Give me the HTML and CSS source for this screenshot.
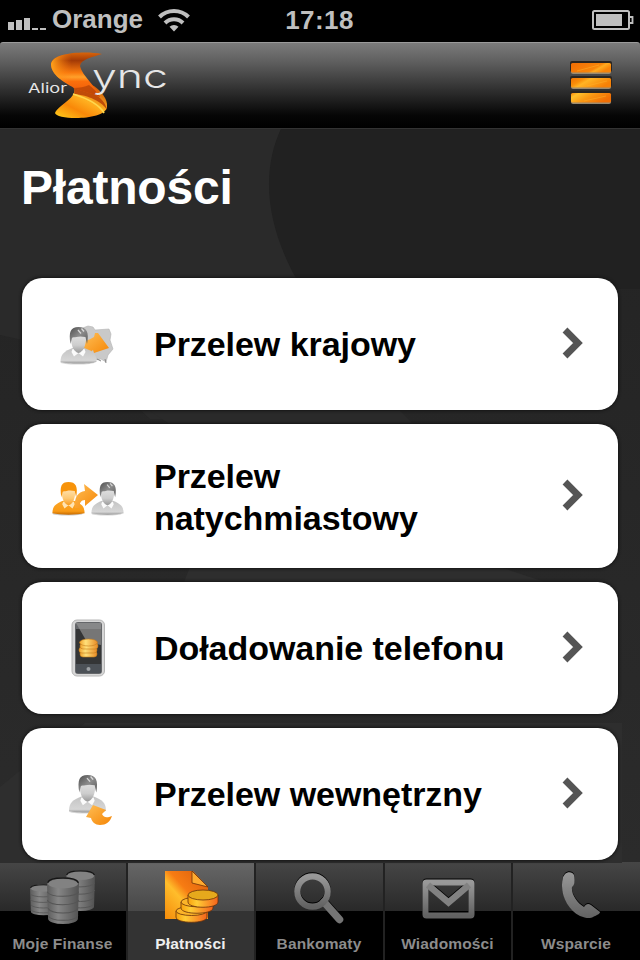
FILE: index.html
```
<!DOCTYPE html>
<html lang="pl">
<head>
    <meta charset="UTF-8">
    <meta name="viewport" content="width=device-width, initial-scale=1.0">
    <title>Płatności</title>
    <link rel="stylesheet" href="styles.css">
</head>
<body>
    <!-- shared gradients and symbols -->
    <svg class="defs" width="0" height="0">
        <defs>
            <linearGradient id="gray" x1="0" y1="0" x2="0" y2="1">
                <stop offset="0" stop-color="#999"/>
                <stop offset="1" stop-color="#626262"/>
            </linearGradient>
            <linearGradient id="coinGray" x1="0" y1="0" x2="1" y2="0">
                <stop offset="0" stop-color="#5c5c5c"/>
                <stop offset=".35" stop-color="#868686"/>
                <stop offset="1" stop-color="#525252"/>
            </linearGradient>
            <linearGradient id="coinGold" x1="0" y1="0" x2="1" y2="0">
                <stop offset="0" stop-color="#f9a10d"/>
                <stop offset=".3" stop-color="#ffcc35"/>
                <stop offset="1" stop-color="#f4631c"/>
            </linearGradient>
            <linearGradient id="coinPale" x1="0" y1="0" x2="1" y2="0">
                <stop offset="0" stop-color="#f0a02a"/>
                <stop offset=".35" stop-color="#ffe07a"/>
                <stop offset="1" stop-color="#e88a25"/>
            </linearGradient>
            <linearGradient id="orange" x1="0" y1="0" x2="1" y2="1">
                <stop offset="0" stop-color="#ffbe55"/>
                <stop offset="1" stop-color="#f58606"/>
            </linearGradient>
            <linearGradient id="faceGray" x1="0" y1="0" x2="0" y2="1">
                <stop offset="0" stop-color="#e4e4e4"/>
                <stop offset=".6" stop-color="#cdcdcd"/>
                <stop offset="1" stop-color="#999"/>
            </linearGradient>
            <linearGradient id="faceOrange" x1="0" y1="0" x2="0" y2="1">
                <stop offset="0" stop-color="#ffe6b8"/>
                <stop offset=".6" stop-color="#fdc873"/>
                <stop offset="1" stop-color="#f89a1c"/>
            </linearGradient>
            <linearGradient id="bodyGray" x1="0" y1="0" x2="0" y2="1">
                <stop offset="0" stop-color="#c4c4c4"/>
                <stop offset=".8" stop-color="#d6d6d6"/>
                <stop offset="1" stop-color="#999"/>
            </linearGradient>
            <linearGradient id="bodyOrange" x1="0" y1="0" x2="0" y2="1">
                <stop offset="0" stop-color="#fba628"/>
                <stop offset=".75" stop-color="#f99b16"/>
                <stop offset="1" stop-color="#c66a00"/>
            </linearGradient>
            <linearGradient id="hairGray" x1="0" y1="0" x2="1" y2="1">
                <stop offset="0" stop-color="#4e4e4e"/>
                <stop offset=".5" stop-color="#8c8c8c"/>
                <stop offset="1" stop-color="#5a5a5a"/>
            </linearGradient>
        </defs>
        <symbol id="person" viewBox="0 0 36 38">
            <ellipse cx="17" cy="35.500" rx="17" ry="2" fill="#000" opacity=".16"/>
            <path d="M0 35C0 27 4 24 12 21h12c8 3 12 6 12 14-8 2-28 2-36 0z" fill="url(#bodyGray)"/>
            <path d="M12 22l-1 3 2.500 4.500 4.500-3.500 4.500 3.500 2.500-4.500-1-3z" fill="#fbfbfb"/>
            <path d="M10.500 11c0 8 3 14 7.500 15 4.500-1 7.500-7 7.500-15-2-6-13-6-15 0z" fill="url(#faceGray)"/>
            <path d="M10 17C8 5 10 0 18 0c8 0 11 5 8.500 17L25 10c-3-.5-6-1-9 0-2 .5-4 0-4.500 1z" fill="url(#hairGray)"/>
            <path d="M17.500 3l3 3.500M21 1.500l2.500 3" stroke="#d8d8d8" stroke-width="1.300"/>
        </symbol>
        <symbol id="personOrange" viewBox="0 0 36 38">
            <ellipse cx="17" cy="35.500" rx="17" ry="2" fill="#000" opacity=".2"/>
            <path d="M0 35C0 27 4 24 12 21h12c8 3 12 6 12 14-8 2-28 2-36 0z" fill="url(#bodyOrange)"/>
            <path d="M12 22l-1 3 2.500 4.500 4.500-3.500 4.500 3.500 2.500-4.500-1-3z" fill="#ffe4b3"/>
            <path d="M10.500 11c0 8 3 14 7.500 15 4.500-1 7.500-7 7.500-15-2-6-13-6-15 0z" fill="url(#faceOrange)"/>
            <path d="M10 17C8 5 10 0 18 0c8 0 11 5 8.500 17L25 10c-3-.5-6-1-9 0-2 .5-4 0-4.500 1z" fill="#f7930a"/>
        </symbol>
        <symbol id="stack" viewBox="0 0 30 46" preserveAspectRatio="none">
            <path d="M0 6a15 5.500 0 0 1 30 0l-1 34a14 5 0 0 1-28 0z" fill="url(#coinGray)"/>
            <path d="M0 14c3 6 26 6 30 0M0 22c3 6 26 6 30 0M1 30c3 6 25 6 28 0M1 37c3 6 25 6 28 0" fill="none" stroke="#555" stroke-width="1"/>
            <ellipse cx="15" cy="6.500" rx="14" ry="4.500" fill="#828282"/>
            <path d="M.5 5.500c2-6 27-6 29 0" fill="none" stroke="#151515" stroke-width="1.300"/>
        </symbol>
    </svg>

    <div class="screen">
        <!-- Status bar -->
        <div class="status-bar">
            <div class="status-left">
                <svg class="signal" width="38" height="14" viewBox="0 0 38 14">
                    <path d="M0 6h6v8H0zM8 4h6v10H8zM16 2h6v12h-6zM24 12h6v2h-6zM32 12h6v2h-6z" fill="#bfbfbf"/>
                </svg>
                <span>Orange</span>
                <svg class="wifi" width="32" height="24" viewBox="0 0 32 24">
                    <g fill="none" stroke="#bfbfbf" stroke-width="4">
                        <path d="M1.500 9a20.500 20.500 0 0 1 29 0"/>
                        <path d="M7 15a12.700 12.700 0 0 1 18 0"/>
                    </g>
                    <path d="M11.500 18.800a6.500 6.500 0 0 1 9 0L16 23.500z" fill="#bfbfbf"/>
                </svg>
            </div>
            <span class="clock">17:18</span>
            <svg class="battery" width="42" height="20" viewBox="0 0 42 20">
                <rect x="1" y="1" width="36" height="18" rx="1.500" fill="none" stroke="#bfbfbf" stroke-width="2"/>
                <rect x="4" y="4" width="26" height="12" fill="#bfbfbf"/>
                <path d="M37 7h3.500v6H37" fill="none" stroke="#bfbfbf" stroke-width="1.800"/>
            </svg>
        </div>

        <!-- Header -->
        <header class="header">
            <svg class="logo" width="150" height="72" viewBox="0 0 150 72">
                <defs>
                    <linearGradient id="sTop" x1="0" y1="0" x2="0" y2="1">
                        <stop offset="0" stop-color="#d8640a"/>
                        <stop offset=".18" stop-color="#a33a06"/>
                        <stop offset=".45" stop-color="#f8790e"/>
                        <stop offset=".55" stop-color="#ffa02a"/>
                        <stop offset=".65" stop-color="#fb6f0c"/>
                        <stop offset="1" stop-color="#e7540a"/>
                    </linearGradient>
                    <linearGradient id="sTopLight" x1="0" y1="0" x2="1" y2="0">
                        <stop offset="0" stop-color="#ffa41c"/>
                        <stop offset=".4" stop-color="#ff7a0a" stop-opacity="0"/>
                    </linearGradient>
                    <linearGradient id="sBottom" x1="0" y1="1" x2=".8" y2="0">
                        <stop offset="0" stop-color="#ffd01c"/>
                        <stop offset=".35" stop-color="#f98808"/>
                        <stop offset=".6" stop-color="#ffb020"/>
                        <stop offset="1" stop-color="#c84f08"/>
                    </linearGradient>
                </defs>
                <path d="M46 37C50 48 31 54 27 63c1 7 50 8 52-6 1-8-6-16-13-21-7-3-15-2-20 1z" fill="url(#sBottom)"/>
                <path d="M45 36c13 3 32 10 34 24-4-8-19-15-33-16 1-3 0-5-1-8z" fill="#c04c08"/>
                <path d="M45 44c13 4 26 10 31 19" fill="none" stroke="#ffd84e" stroke-width="1.800"/>
                <path d="M74 4C58 1 25 2 23 14c0 11 13 18 23 24 9 4 18 5 26 9-3-10-18-21-20-31 1-7 13-9 22-12z" fill="url(#sTop)"/>
                <path d="M74 4C58 1 25 2 23 14c0 11 13 18 23 24 9 4 18 5 26 9-3-10-18-21-20-31 1-7 13-9 22-12z" fill="url(#sTopLight)"/>
                <path d="M46 38c9 4 18 5 26 9-3-5-7-9-11-12-4 2-10 3-15 3z" fill="#b04106" opacity=".7"/>
                <text class="logo-small" x="0" y="43" textLength="39" lengthAdjust="spacingAndGlyphs">Alior</text>
                <text class="logo-big" x="64" y="37.500" textLength="76" lengthAdjust="spacingAndGlyphs">ync</text>
            </svg>
            <svg class="menu" width="44" height="46" viewBox="0 0 44 46">
                <defs>
                    <linearGradient id="bar1" x1="0" y1="0" x2="1" y2=".4">
                        <stop offset="0" stop-color="#f06c04"/>
                        <stop offset=".7" stop-color="#f9860a"/>
                        <stop offset=".8" stop-color="#ffab20"/>
                        <stop offset="1" stop-color="#f98408"/>
                    </linearGradient>
                    <linearGradient id="bar2" x1="0" y1="0" x2="1" y2=".4">
                        <stop offset="0" stop-color="#ef7204"/>
                        <stop offset=".3" stop-color="#f9900a"/>
                        <stop offset=".45" stop-color="#ffb424"/>
                        <stop offset="1" stop-color="#f78106"/>
                    </linearGradient>
                    <linearGradient id="bar3" x1="0" y1="0" x2="1" y2=".4">
                        <stop offset="0" stop-color="#f98408"/>
                        <stop offset=".18" stop-color="#ffc02c"/>
                        <stop offset=".5" stop-color="#fb9a14"/>
                        <stop offset="1" stop-color="#f26f04"/>
                    </linearGradient>
                </defs>
                <g fill="#2b2520">
                    <rect x="1" y="1" width="42" height="11" rx="2"/>
                    <rect x="1" y="16" width="42" height="11" rx="2"/>
                    <rect x="1" y="31" width="42" height="11" rx="2"/>
                </g>
                <g fill="#9b8b70">
                    <rect x="2" y="4" width="40" height="10" rx="2"/>
                    <rect x="2" y="19" width="40" height="10" rx="2"/>
                    <rect x="2" y="34" width="40" height="10" rx="2"/>
                </g>
                <rect x="2" y="3" width="40" height="9.500" rx="1.500" fill="url(#bar1)"/>
                <rect x="2" y="18" width="40" height="9.500" rx="1.500" fill="url(#bar2)"/>
                <rect x="2" y="33" width="40" height="9.500" rx="1.500" fill="url(#bar3)"/>
                <path d="M8 11l22-6M18 26l20-5M15 41l22-5" stroke="#ffb02a" stroke-width="1" opacity=".5"/>
            </svg>
        </header>

        <!-- Content -->
        <main class="content">
            <svg class="backdrop" width="640" height="734" viewBox="0 0 640 734">
                <path d="M0 0h281C266 34 264 80 298 150L350 290H150Q80 220 0 206z" fill="#2a2a2a"/>
                <path d="M281 0h359v160H302C263 95 262 40 281 0z" fill="#212121"/>
                <path d="M150 282h250l20 20H180z" fill="#2a2a2a"/>
                <path d="M190 438h310l60 20H182zM85 594h537v140H0V658L22 640z" fill="#2e2e2e"/>
            </svg>
            <h1>Płatności</h1>
            <div class="list">
                <a class="card">
                    <span class="card-icon">
                        <svg width="72" height="50" viewBox="0 0 72 50">
                            <path d="M28 10l8-3 5 1 2 3 14-1 2 5-1 6 3 9-5 6-2 7-5-3-5 1-5-3-9 1z" fill="#c9c9c9" stroke="#b4b4b4" stroke-width=".6"/>
                            <path d="M53 40l1 4M45 40l4 2" stroke="#888" stroke-width="1"/>
                            <path d="M32 22c4-1 7-2 10-4l1-4 3 0 11 15-15 5-1-3-5 4-4-1z" fill="url(#orange)"/>
                            <use href="#person" x="8" y="8" width="37" height="38"/>
                        </svg>
                    </span>
                    <span class="card-title">Przelew krajowy</span>
                    <svg class="chevron" width="24" height="34" viewBox="0 0 24 34"><path d="M4 4l13 13L4 30" fill="none" stroke="#555" stroke-width="6.800"/></svg>
                </a>
                <a class="card tall">
                    <span class="card-icon">
                        <svg width="72" height="50" viewBox="0 0 72 50">
                            <use href="#personOrange" x="0" y="11" width="33" height="34"/>
                            <use href="#person" x="39" y="11" width="33" height="34"/>
                            <path d="M23 37c-1-11 3-16 10-17l-1-7 14 11-13 11 0-6c-4 0-6 3-5 8z" fill="url(#orange)"/>
                        </svg>
                    </span>
                    <span class="card-title">Przelew natychmiastowy</span>
                    <svg class="chevron" width="24" height="34" viewBox="0 0 24 34"><path d="M4 4l13 13L4 30" fill="none" stroke="#555" stroke-width="6.800"/></svg>
                </a>
                <a class="card">
                    <span class="card-icon">
                        <svg width="72" height="60" viewBox="0 0 72 60">
                            <rect x="20" y="2" width="32.500" height="56" rx="5" fill="#d7d7d7" stroke="#b6b6b6"/>
                            <rect x="23" y="4" width="27" height="52" rx="3" fill="#65676a"/>
                            <rect x="24" y="11" width="25" height="35" fill="#343536"/>
                            <path d="M24 5h25v22L35 24z" fill="#999" opacity=".65"/>
                            <path d="M24 46h25v9H24z" fill="#4c5157"/>
                            <circle cx="36.500" cy="51" r="2" fill="#9da1a5"/>
                            <g fill="url(#coinPale)" stroke="#c47c1c" stroke-width=".6">
                                <rect x="28" y="33" width="17" height="6" rx="3"/>
                                <rect x="27" y="29" width="18" height="6" rx="3"/>
                                <rect x="28" y="25" width="18" height="6" rx="3"/>
                                <ellipse cx="36.500" cy="24.500" rx="9" ry="3.500"/>
                            </g>
                        </svg>
                    </span>
                    <span class="card-title">Doładowanie telefonu</span>
                    <svg class="chevron" width="24" height="34" viewBox="0 0 24 34"><path d="M4 4l13 13L4 30" fill="none" stroke="#555" stroke-width="6.800"/></svg>
                </a>
                <a class="card">
                    <span class="card-icon">
                        <svg width="72" height="68" viewBox="0 -4 72 68">
                            <use href="#person" x="17" y="11" width="37" height="39"/>
                            <path d="M41 41l13 5-4 4c2 4 5 4 10 2-2 6-6 9-12 9-5 0-8-3-9-7l-5-1z" fill="url(#orange)"/>
                        </svg>
                    </span>
                    <span class="card-title">Przelew wewnętrzny</span>
                    <svg class="chevron" width="24" height="34" viewBox="0 0 24 34"><path d="M4 4l13 13L4 30" fill="none" stroke="#555" stroke-width="6.800"/></svg>
                </a>
            </div>
        </main>

        <!-- Tab bar -->
        <nav class="tab-bar">
            <a class="tab">
                <svg width="80" height="64" viewBox="0 0 80 64">
                    <use href="#stack" x="43" y="8" width="29" height="42"/>
                    <use href="#stack" x="7" y="22" width="27" height="32"/>
                    <use href="#stack" x="24" y="15" width="32" height="48"/>
                </svg>
                <span>Moje Finanse</span>
            </a>
            <a class="tab active">
                <svg width="80" height="64" viewBox="0 0 80 64">
                    <defs>
                        <linearGradient id="doc" x1="1" y1="0" x2="0" y2="1">
                            <stop offset="0" stop-color="#d95b0b"/>
                            <stop offset=".45" stop-color="#f77c13"/>
                            <stop offset=".6" stop-color="#ffbd2b"/>
                            <stop offset="1" stop-color="#f58b0a"/>
                        </linearGradient>
                    </defs>
                    <path d="M14 9h28l15 16v32H14z" fill="url(#doc)"/>
                    <path d="M41 9v12l16 4z" fill="#ffab2f" stroke="#703006" stroke-width=".8"/>
                    <g stroke="#683009" stroke-width=".8">
                        <path d="M25 49v6c0 7 31 7 31 0v-6z" fill="url(#coinGold)"/>
                        <ellipse cx="40.500" cy="49" rx="15.500" ry="4.500" fill="#fbb429"/>
                        <path d="M30 40v6c0 7 32 7 32 0v-6z" fill="url(#coinGold)"/>
                        <ellipse cx="46" cy="40" rx="16" ry="4.800" fill="#fbb429"/>
                        <path d="M37 33v7c0 7 30 7 30 0v-7z" fill="url(#coinGold)"/>
                        <ellipse cx="52" cy="33" rx="15" ry="5" fill="#e6a91c"/>
                    </g>
                </svg>
                <span>Płatności</span>
            </a>
            <a class="tab">
                <svg class="shade" width="80" height="64" viewBox="0 0 80 64">
                    <path d="M45 40l15.500 17.500" stroke="#747474" stroke-width="7.500" stroke-linecap="round"/>
                    <circle cx="33.500" cy="29.500" r="15.200" fill="none" stroke="url(#gray)" stroke-width="6.200"/>
                </svg>
                <span>Bankomaty</span>
            </a>
            <a class="tab">
                <svg class="shade" width="80" height="64" viewBox="0 0 80 64">
                    <rect x="17.500" y="20.500" width="46" height="33" rx="1" fill="none" stroke="url(#gray)" stroke-width="6"/>
                    <path d="M20 23l20.500 17.500L61 23" fill="none" stroke="#828282" stroke-width="6.500"/>
                </svg>
                <span>Wiadomości</span>
            </a>
            <a class="tab">
                <svg class="shade" width="80" height="64" viewBox="0 0 80 64">
                    <path d="M29 12c3-3 8-2 9 1 1 4 1 10-2 12-1 7 5 16 12 20 2-3 4-4 7-2l9 7c0 2-3 3-7 5-3 2-8 1-13-1C31 47 23 31 27 15z" fill="url(#gray)"/>
                </svg>
                <span>Wsparcie</span>
            </a>
        </nav>
    </div>
</body>
</html>
```

FILE: styles.css
```
* {
    margin: 0;
    padding: 0;
    box-sizing: border-box;
}
body {
    font-family: "Liberation Sans", Arial, sans-serif;
    background: #000;
}
.defs {
    position: absolute;
}
.screen {
    width: 640px;
    height: 960px;
    display: flex;
    flex-direction: column;
    overflow: hidden;
}

/* status bar */
.status-bar {
    height: 42px;
    flex: none;
    display: grid;
    grid-template-columns: 1fr auto 1fr;
    align-items: center;
    padding: 0 6px 3px 8px;
    background: #000;
    color: #bfbfbf;
    font-size: 26px;
    font-weight: bold;
}
.status-left {
    display: flex;
    align-items: center;
}
.signal {
    margin: 6px 6px 0 0;
}
.wifi {
    margin-left: 15px;
}
.clock {
    margin-right: 3px;
    padding-top: 1px;
    letter-spacing: 0.4px;
}
.battery {
    justify-self: end;
}

/* header */
.header {
    height: 86px;
    flex: none;
    display: flex;
    justify-content: space-between;
    align-items: flex-start;
    padding: 7px 27px 0 28px;
    background: linear-gradient(#7b7b7b 0%, #5f5f5f 22%, #303030 55%, #060606 85%, #000 100%);
    border-top: 1px solid #9a9a9a;
    border-radius: 3px 3px 0 0;
}
.menu {
    margin-top: 10px;
}
.logo text {
    font-family: Inter, "Open Sans", sans-serif;
    fill: #e6e6e6;
}
.logo-small {
    font-size: 13px;
    font-weight: 400;
}
.logo-big {
    font-size: 32px;
    font-weight: 300;
}

/* content */
.content {
    position: relative;
    height: 734px;
    flex: none;
    padding: 0 22px;
    background: linear-gradient(#232323, #2b2b2b);
    border-top: 1px solid #333;
}
.backdrop {
    position: absolute;
    top: 0;
    left: 0;
}
h1 {
    position: relative;
    height: 149px;
    margin-left: -1px;
    padding-top: 31px;
    font-size: 48px;
    line-height: 56px;
    letter-spacing: -0.2px;
    color: #fff;
}
.list {
    position: relative;
    display: flex;
    flex-direction: column;
    gap: 14px;
}
.card {
    height: 132px;
    display: flex;
    align-items: center;
    padding: 0 33px 0 30px;
    background: #fff;
    border-radius: 20px;
    box-shadow: 0 0 3px 1px #151515;
}
.card.tall {
    height: 144px;
}
.card.tall .card-title {
    padding-top: 2px;
}
.card-icon {
    width: 102px;
    display: flex;
}
.card-title {
    flex: 1;
    max-width: 380px;
    font-size: 34px;
    line-height: 42px;
    font-weight: bold;
    letter-spacing: -0.05px;
    color: #000;
}
.chevron {
    margin: 0 0 2px auto;
}

/* tab bar */
.tab-bar {
    height: 98px;
    flex: none;
    display: grid;
    grid-template-columns: 128px 128px 129px 128px 127px;
    background: linear-gradient(#464646, #292929 49px, #000 49px);
}
.tab {
    display: flex;
    flex-direction: column;
    align-items: center;
    padding-right: 1px;
    border-right: 2px solid #222;
    font-size: 15.5px;
    font-weight: bold;
    letter-spacing: 0.15px;
    color: #8c8c8c;
}
.tab svg {
    flex: none;
    margin-bottom: 9px;
}
.tab span {
    line-height: 18px;
    white-space: nowrap;
}
.tab:last-child {
    border-right: 0;
}
.tab.active {
    background: linear-gradient(#666, #484848 49px, #333 49px);
    color: #eee;
}
.shade {
    filter: drop-shadow(0 -1px 0 #000);
}
```
